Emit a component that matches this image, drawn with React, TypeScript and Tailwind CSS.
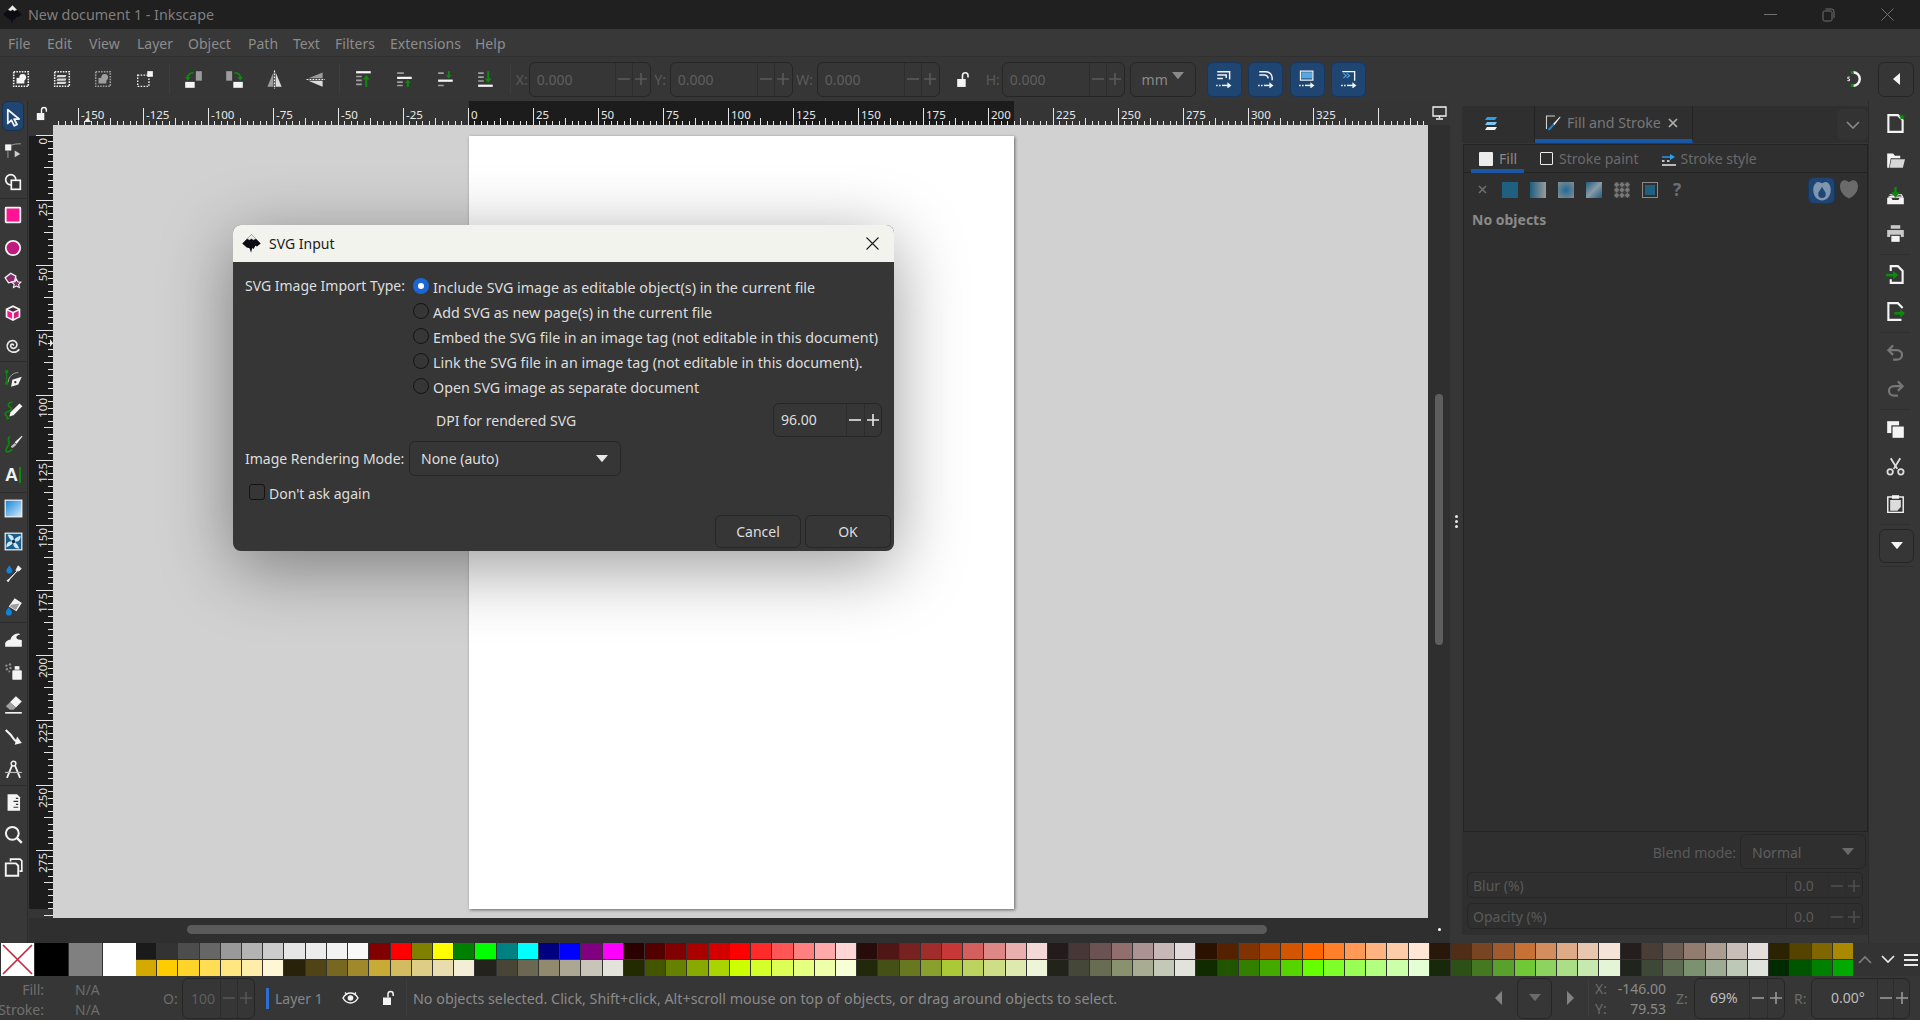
import React from "react";

const W = "#f4f4f4";
const G = "#0b8a0b";

function I({ s = 18, v = "0 0 16 16", o = 1, children }: { s?: number; v?: string; o?: number; children: React.ReactNode }) {
  return (
    <svg width={s} height={s} viewBox={v} opacity={o} className="block shrink-0">
      {children}
    </svg>
  );
}

const Logo = ({ s = 17 }: { s?: number }) => (
  <I s={s}>
    <path d="M8 .3 L15.8 8 L12.6 10.6 L11.2 9.8 L9.8 12.6 L8.6 11.8 L7.6 15.8 L6.4 12 L4 11.4 L.2 8 Z" fill="#0c0c12" />
    <path d="M8 .3 L11.8 4.1 L9.6 5 L8 4 L6.4 5 L4.2 4.1 Z" fill="#ededed" stroke="#777" strokeWidth="0.3" />
  </I>
);

const Dots = ({ o = 1 }: { o?: number }) => <rect x="1.5" y="1.5" width="13" height="13" fill="none" stroke="#f2f2f2" strokeWidth="1.4" strokeDasharray="1.4 1" opacity={o} />;

const Lock = ({ s = 16 }: { s?: number }) => (
  <I s={s}>
    <path d="M3 7.5h8v7.5H3z" fill={W} />
    <path d="M8 7.5V4.2a2.6 2.6 0 0 1 5.2 0V6" fill="none" stroke={W} strokeWidth="1.5" />
  </I>
);

const cmdIcons1 = [
  <I key="a"><Dots /><rect x="4" y="7" width="7" height="5" fill={W} /><circle cx="9.5" cy="6.5" r="3" fill={W} /></I>,
  <I key="b"><Dots /><path d="M4 4.5h8l-1 2H3zM4 7.5h8l-1 2H3zM4 10.5h8l-1 2H3z" fill="#d8d8d8" /></I>,
  <I key="c" o={0.55}><Dots /><rect x="4" y="7" width="7" height="5" fill={W} /><circle cx="9.5" cy="6.5" r="3" fill={W} /></I>,
  <I key="d"><rect x="1.5" y="4.5" width="10" height="10" fill="none" stroke={W} strokeWidth="1.2" strokeDasharray="1.4 1.2" /><rect x="10" y="1" width="5" height="5" fill={W} /></I>,
];

const cmdIcons2 = [
  <I key="a" s={19}><rect x="10" y="1" width="5" height="8" fill="#9c9c9c" /><rect x="1" y="10" width="8" height="5" fill={W} /><path d="M8 2.5A4 4 0 0 0 3.2 7" fill="none" stroke={G} strokeWidth="1.6" /><path d="M0.8 5.8h4.8L3.2 9z" fill={G} /></I>,
  <I key="b" s={19}><rect x="1" y="1" width="5" height="8" fill="#9c9c9c" /><rect x="7" y="10" width="8" height="5" fill={W} /><path d="M8 2.5A4 4 0 0 1 12.8 7" fill="none" stroke={G} strokeWidth="1.6" /><path d="M15.2 5.8h-4.8L12.8 9z" fill={G} /></I>,
  <I key="c" s={19}><path d="M7 2L2 14h5z" fill="#9c9c9c" /><path d="M9 2l5 12H9z" fill="#dcdcdc" /><path d="M8 0.5V16" stroke={W} strokeWidth="1" strokeDasharray="1.5 1" /></I>,
  <I key="d" s={19}><path d="M2 7L14 2v5z" fill="#9c9c9c" /><path d="M2 9l12 5V9z" fill="#dcdcdc" /><path d="M0.5 8H16" stroke={W} strokeWidth="1" strokeDasharray="1.5 1" /></I>,
];

const cmdIcons3 = [
  <I key="a"><rect x="1" y="1" width="13" height="2" fill={W} /><path d="M1 5h5v1.5H1zM1 8.500h5V10H1zM1 12h5v1.5H1z" fill="#a0a0a0" /><path d="M10 15V7" stroke={G} strokeWidth="1.8" /><path d="M7 8.500L10 4.500l3 4z" fill={G} /></I>,
  <I key="b"><path d="M1 2h6v1.5H1z" fill="#a0a0a0" /><rect x="1" y="6" width="13" height="2" fill={W} /><path d="M1 10h5v1.5H1zM1 13h5v1.5H1z" fill="#a0a0a0" /><path d="M10.500 15V11" stroke={G} strokeWidth="1.8" /><path d="M8 11.500L10.500 8.500l2.500 3z" fill={G} /></I>,
  <I key="c"><path d="M1 2h5v1.5H1zM1 13h5v1.5H1z" fill="#a0a0a0" /><rect x="1" y="8.500" width="13" height="2" fill={W} /><path d="M10.500 1V5" stroke={G} strokeWidth="1.8" /><path d="M8 4.500L10.500 7.500l2.500-3z" fill={G} /></I>,
  <I key="d"><path d="M1 2h5v1.5H1zM1 5.500h5V7H1zM1 9h5v1.5H1z" fill="#a0a0a0" /><rect x="1" y="13" width="13" height="2" fill={W} /><path d="M10 1V9" stroke={G} strokeWidth="1.8" /><path d="M7 7.500L10 11.500l3-4z" fill={G} /></I>,
];

const Arr = () => (
  <>
    <path d="M1 13h1.4v1.4H1zM3.6 13H5v1.4H3.6z" fill={W} />
    <path d="M6.2 13.700H12" stroke={W} strokeWidth="1.3" />
    <path d="M11 10.800l3.600 2.900L11 16.500z" fill={W} />
  </>
);
const blueIcons = [
  <I key="a"><path d="M2 1.500h11v7M2 4.500h8v2.500M2 7.500h5" fill="none" stroke={W} strokeWidth="1.3" /><Arr /></I>,
  <I key="b"><path d="M2 1.500h6a5.500 5.500 0 0 1 5.500 5.500v2M2 4.500h5a3.500 3.500 0 0 1 3 3" fill="none" stroke={W} strokeWidth="1.3" /><Arr /></I>,
  <I key="c"><rect x="2.200" y="1" width="11" height="8" fill="none" stroke={W} strokeWidth="1.100" /><rect x="3" y="2" width="9.500" height="5.500" fill="#5aa7e0" /><Arr /></I>,
  <I key="d"><path d="M2 1.500h11v8" fill="none" stroke={W} strokeWidth="1.200" /><path d="M3 3l2.500 2L3 7M6 3l2.500 2L6 7" fill="none" stroke="#4ea3e6" strokeWidth="1.100" /><Arr /></I>,
];

const tools = {
  select: <I s={19}><path d="M3.200 1.500V13l3-2.800L8.700 15l2.300-1.100-2.500-4.600h4.200z" fill="#1f4573" stroke={W} strokeWidth="1.500" strokeLinejoin="round" /></I>,
  node: <I><rect x="1" y="3" width="5.500" height="5.500" fill={W} /><path d="M6 4c3-1.500 6-1.500 9-1.500" fill="none" stroke="#a8a8a8" strokeWidth="0.8" /><path d="M3.500 9c0 2 0 4 0 6" stroke="#a8a8a8" strokeWidth="0.8" /><path d="M9.500 8.500l5 3-5 3z" fill="#cfcfcf" /></I>,
  shape: <I><circle cx="6" cy="6" r="4.500" fill="none" stroke={W} strokeWidth="1.500" /><rect x="6.500" y="6.500" width="8" height="8" fill="#333" stroke={W} strokeWidth="1.500" /></I>,
  rect: <I><rect x="1.500" y="1.500" width="13" height="13" fill="#ff1493" stroke={W} strokeWidth="1.600" rx="0.5" /></I>,
  circle: <I><circle cx="8" cy="8" r="6.400" fill="#c01a7e" stroke={W} strokeWidth="1.600" /></I>,
  star: <I><path d="M6 2l4.500 2.500-1 4.500L4 10.500 1 6z" fill="#8c2a6e" stroke={W} strokeWidth="1.200" /><path d="M11 7l1.200 2.600 2.800.3-2 2 .6 2.800L11 13.400l-2.600 1.300.6-2.800-2-2 2.800-.3z" fill="#8c2a6e" stroke={W} strokeWidth="1" /></I>,
  cube: <I><path d="M8 1l6.500 3.200v7.600L8 15l-6.500-3.200V4.200z" fill={W} /><path d="M8 2.800l4.400 2L8 6.800l-4.400-2z" fill="#4a2a3a" /><path d="M3 6l4.200 2v5l-4.200-2z" fill="#ff1493" /><path d="M13 6L8.800 8v5l4.200-2z" fill="#d81b7e" /></I>,
  spiral: <I><path d="M8.200 8.500c.6-1.200-1.200-1.700-2-.7-1 1.400.4 3.400 2.500 3.200 2.600-.3 3.600-3.400 2.200-5.300C9.200 3.400 5.400 3.700 3.600 6.200 1.700 9 3.200 13.200 7 14.200c2.600.6 5-.4 6.600-2.500" fill="none" stroke="#e8e8e8" strokeWidth="1.500" /></I>,
  pen: <I s={19}><rect x="1" y="1" width="2.600" height="2.600" fill={G} /><rect x="1" y="10.500" width="2.600" height="2.600" fill={G} /><path d="M2.300 3.600v7" stroke={G} strokeWidth="1" /><path d="M3.500 11C4 6 8 3 12 3" fill="none" stroke="#a8a8a8" strokeWidth="0.8" /><path d="M15 6.500l-3 6.500-6 2 1-6z" fill={W} /><circle cx="9.500" cy="11" r="1" fill="#333" /></I>,
  pencil: <I s={19}><path d="M7 1C3 1 3 4 5 5S7 8 3 9s-1 4 0 4" fill="none" stroke={G} strokeWidth="1.300" /><path d="M13 2l2.500 2.500-7.500 7.500-3.500 1 1-3.500z" fill={W} /><path d="M2 12.500L5 15l-3 .7z" fill={G} /></I>,
  calli: <I s={19}><path d="M15 1.500L9 7l1.500 1.500L15.500 2z" fill={W} /><path d="M9 7.500l1.500 1.500-3 2.500c-1 .6-2-.6-1.400-1.400z" fill="#bdbdbd" /><path d="M5 2C2 4 5 7 4 9S1 12 2 15c2 .5 4-1 5-2" fill="none" stroke={G} strokeWidth="1.400" /></I>,
  grad: <I s={19}><defs><linearGradient id="lg1" x1="0" y1="0" x2="1" y2="1"><stop offset="0" stopColor="#0f83d8" /><stop offset="1" stopColor="#d8ecfa" /></linearGradient></defs><rect x="1" y="1" width="14" height="14" fill="url(#lg1)" stroke={W} strokeWidth="1" /></I>,
  mesh: <I s={19}><rect x="1" y="1" width="14" height="14" fill="#1a5f8c" stroke={W} strokeWidth="1" /><path d="M8 8c-3-1-4-4-5-6 3 0 6 1 5 6zM8 8c3 1 4 4 5 6-3 0-6-1-5-6zM8 8c1-3 4-4 6-5 0 3-1 6-6 5zM8 8c-1 3-4 4-6 5 0-3 1-6 6-5z" fill="#cfe6f5" /><circle cx="8" cy="8" r="1.400" fill="#0d2d45" /></I>,
  dropper: <I s={19}><path d="M4.500 1C3.500 3 2 4 2 5.500a2.500 2.500 0 0 0 5 0C7 4 5.500 3 4.500 1z" fill="#0f83d8" /><path d="M12 1.500l2.500 2.500-2 2-.8-.6L6 11l-2.500 4-1-1 3.800-2.800L10.800 6l-.8-.8z" fill={W} stroke={W} strokeWidth="0.7" /></I>,
  bucket: <I s={19}><path d="M9 1l6 4-4.500 7-6.500-4z" fill={W} /><path d="M6 6.500l7-1-3 5.500-5-3z" fill="#9d9d9d" /><path d="M4 8.500C3 10.500 1.500 11.500 1.500 13a2.600 2.600 0 0 0 5.200 0C6.700 11.500 5 10.500 4 8.500z" fill="#0f83d8" /></I>,
  tweak: <I s={19}><path d="M1 14v-3c1-1.800 3-3 4.600-3 .4-2.400 3-5 6-5 1 0 1.600.5 2 1-2.200 0-3.600 1.400-3 3 .5 1 2.300 1.300 4.400 1.500V14z" fill={W} /></I>,
  spray: <I s={19}><rect x="7" y="7" width="8" height="8" rx="1" fill={W} /><rect x="9" y="3.500" width="4" height="3" fill={W} /><circle cx="2" cy="3" r="1" fill="#8e8e8e" /><circle cx="5" cy="2" r="1" fill="#8e8e8e" /><circle cx="2.500" cy="6" r="1" fill="#8e8e8e" /><circle cx="5.500" cy="5" r="1" fill="#8e8e8e" /><circle cx="4.500" cy="8" r="0.8" fill="#8e8e8e" /></I>,
  eraser: <I s={19}><path d="M10 1l5 4.500-5 5L5 6z" fill={W} /><path d="M5 6l5 4.500-2 2H5L1.500 9.500z" fill="#a0a0a0" /><path d="M1 15h14" stroke={W} strokeWidth="1.400" /></I>,
  conn: <I s={19}><path d="M1.500 2.500L6 7c1.500 2 2.500 4.500 4.500 5L12 12" fill="none" stroke={W} strokeWidth="1.800" /><path d="M11 8l4 5.500-6 1.500z" fill={W} /></I>,
  lpe: <I s={19}><circle cx="8" cy="3" r="2" fill="none" stroke={W} strokeWidth="1.200" /><path d="M6.800 4.500L2.500 15M9.200 4.500L13.500 15" stroke={W} strokeWidth="1.500" /><path d="M1 10.500h14" stroke="#bdbdbd" strokeWidth="1" /></I>,
  doc: <I s={19}><path d="M3 1h8l2.500 2.500V15H3z" fill={W} /><path d="M10 4.500h2M8 7h4M10 9.500h2M8 12h4" stroke="#333" strokeWidth="1" /></I>,
  zoom: <I s={19}><circle cx="7" cy="7" r="5.400" fill="none" stroke={W} strokeWidth="1.700" /><path d="M11 11l4 4" stroke={W} strokeWidth="2" /></I>,
  pages: <I s={19}><path d="M5.500 3V1h8l1.500 1.500V11h-2" fill="none" stroke={W} strokeWidth="1.400" /><path d="M1.500 4.500h8.500l2 2v8.500H1.500z" fill="none" stroke={W} strokeWidth="1.600" /></I>,
};

const Sep = () => <div className="h-px w-full bg-[#2b2b2b] shrink-0" />;

function ToolItem({ children, active }: { children: React.ReactNode; active?: boolean }) {
  return (
    <div className="h-[32.4px] w-full flex items-center justify-center relative shrink-0">
      {active && <div className="absolute left-[2px] top-0 w-[22px] h-[30px] rounded-md bg-[#1f4573] border border-[#17314f]" />}
      <div className="relative">{children}</div>
    </div>
  );
}

function LeftBar() {
  const g = [
    [tools.select, tools.node, tools.shape],
    [tools.rect, tools.circle, tools.star, tools.cube, tools.spiral],
    [tools.pen, tools.pencil, tools.calli, <div key="t" className="flex items-center"><span className="text-[18px] font-bold leading-none text-[#f2f2f2] font-['Liberation_Sans',sans-serif]">A</span><span className="w-[2px] h-[16px] bg-[#0b8a0b] ml-[1px]" /></div>],
    [tools.grad, tools.mesh, tools.dropper, tools.bucket],
    [tools.tweak, tools.spray, tools.eraser, tools.conn, tools.lpe],
    [tools.doc, tools.zoom, tools.pages],
  ];
  return (
    <div className="w-[26px] pr-px shrink-0 bg-[#383838] border-r border-[#2b2b2b] box-content">
      {g.map((items, i) => (
        <React.Fragment key={i}>
          {i > 0 && <Sep />}
          {items.map((it, j) => (
            <ToolItem key={j} active={i === 0 && j === 0}>{it}</ToolItem>
          ))}
        </React.Fragment>
      ))}
    </div>
  );
}

function HRuler() {
  const items: React.ReactNode[] = [];
  for (let i = -64; i <= 148; i++) {
    const x = 415 + i * 6.5;
    const maj = i % 10 === 0;
    const mid = i % 5 === 0;
    const top = maj ? 7 : mid ? 17 : 19.5;
    items.push(<line key={i} x1={x} x2={x} y1={top} y2={24} stroke="#e6e6e6" strokeWidth="1" shapeRendering="crispEdges" />);
    if (maj && i < 140) {
      items.push(
        <text key={"t" + i} x={x + 3} y={17.5} fontSize="11.5" fill="#e8e8e8" fontFamily="Noto Sans, sans-serif">
          {i * 2.5}
        </text>
      );
    }
  }
  return (
    <svg width="1375" height="24" className="block shrink-0 bg-[#353535]">
      <rect x="416" y="0" width="545" height="24" fill="#1c1c1c" />
      {items}
      <path d="M31 24l3-4h1l3 4z" fill="#e8e8e8" transform="translate(0,-3)" />
    </svg>
  );
}

function VRuler() {
  const items: React.ReactNode[] = [];
  for (let i = 0; i <= 120; i++) {
    const y = 10 + i * 6.5;
    const maj = i % 10 === 0;
    const mid = i % 5 === 0;
    const left = maj && i < 120 ? 7 : mid ? 15 : 19;
    items.push(<line key={i} x1={left} x2={24} y1={y} y2={y} stroke="#e6e6e6" strokeWidth="1" shapeRendering="crispEdges" />);
    if (maj && i < 120) {
      items.push(
        <text key={"t" + i} transform={`translate(17.5 ${y + 3}) rotate(-90)`} textAnchor="end" fontSize="11.5" fill="#e8e8e8" fontFamily="Noto Sans, sans-serif">
          {i * 2.5}
        </text>
      );
    }
  }
  return (
    <svg width="24" height="793" className="block shrink-0 bg-[#353535]">
      <rect x="0" y="11" width="24" height="773" fill="#1c1c1c" />
      {items}
      <path d="M21 214l3 4-3 4z" fill="#e8e8e8" />
    </svg>
  );
}

function PM({ c = "#5a5a5a", w = 17.5 }: { c?: string; w?: number }) {
  return (
    <>
      <div className="h-full border-l border-[#2c2c2c] flex items-center justify-center shrink-0" style={{ width: w }}>
        <svg width="12" height="12" viewBox="0 0 12 12"><path d="M0 6h12" stroke={c} strokeWidth="1.6" /></svg>
      </div>
      <div className="h-full border-l border-[#2c2c2c] flex items-center justify-center shrink-0" style={{ width: w }}>
        <svg width="12" height="12" viewBox="0 0 12 12"><path d="M0 6h12M6 0v12" stroke={c} strokeWidth="1.6" /></svg>
      </div>
    </>
  );
}

function CmdField({ label, lw, value, w }: { label: string; lw: number; value: string; w: number }) {
  return (
    <>
      <div className="text-[14px] text-[#5a5a5a] text-center shrink-0" style={{ width: lw }}>{label}</div>
      <div className="h-[35px] flex items-center border border-[#262626] rounded-md shrink-0" style={{ width: w }}>
        <div className="flex-1 pl-[7px] text-[14px] text-[#5f5f5f]">{value}</div>
        <PM />
      </div>
    </>
  );
}

const Caret = ({ c = "#dcdcdc", w = 12 }: { c?: string; w?: number }) => (
  <svg width={w} height={w * 0.6} viewBox="0 0 10 6" className="block shrink-0"><path d="M0 0h10L5 6z" fill={c} /></svg>
);

function CmdBar() {
  const Btn = ({ c, w }: { c: React.ReactNode; w: string }) => <div className={`${w} h-full flex items-center justify-center shrink-0`}>{c}</div>;
  const V = () => <div className="w-px h-[30px] bg-[#3e3e3e] mx-[3.5px] shrink-0" />;
  return (
    <div className="h-[44px] shrink-0 bg-[#363636] flex items-center">
      {cmdIcons1.map((c, i) => <Btn key={i} c={c} w="w-[41.3px]" />)}
      <V />
      {cmdIcons2.map((c, i) => <Btn key={i} c={c} w="w-[40.7px]" />)}
      <V />
      {cmdIcons3.map((c, i) => <Btn key={i} c={c} w="w-[40.7px]" />)}
      <V />
      <CmdField label="X:" lw={14} value="0.000" w={122} />
      <CmdField label="Y:" lw={19} value="0.000" w={123} />
      <CmdField label="W:" lw={24} value="0.000" w={123} />
      <div className="w-[46px] flex justify-center shrink-0"><Lock s={17} /></div>
      <div className="w-[16px] text-[14px] text-[#5a5a5a] shrink-0">H:</div>
      <div className="h-[35px] w-[123px] flex items-center border border-[#262626] rounded-md shrink-0">
        <div className="flex-1 pl-[7px] text-[14px] text-[#5f5f5f]">0.000</div>
        <PM />
      </div>
      <div className="ml-[5px] w-[66px] h-[35px] border border-[#262626] rounded-md flex items-center justify-center gap-[4px] text-[14px] text-[#8a8a8a] shrink-0">
        mm<div className="mb-[6px]"><Caret c="#8a8a8a" /></div>
      </div>
      <div className="w-[11px] shrink-0" />
      <div className="flex gap-[6.5px] shrink-0">
        {blueIcons.map((c, i) => (
          <div key={i} className="w-[35px] h-[35px] rounded-md bg-[#1f4573] border border-[#19375c] flex items-center justify-center">{c}</div>
        ))}
      </div>
      <div className="flex-1" />
      <div className="mr-[16px]">
        <svg width="18" height="18" viewBox="0 0 16 16" className="block">
          <path d="M8 2a6 6 0 0 1 0 12" fill="none" stroke="#f2f2f2" strokeWidth="2.200" />
          <rect x="6" y="1" width="2.600" height="2.600" fill={G} />
          <rect x="6" y="12.400" width="2.600" height="2.600" fill={G} />
          <path d="M5 6.400c-1-.5-2 0-1.600.9.4.7 1.600.6 1.600 1.400 0 .9-1.200 1-2 .5" fill="none" stroke="#f2f2f2" strokeWidth="0.9" />
        </svg>
      </div>
      <div className="w-[36px] h-[35px] border border-[#262626] rounded-md flex items-center justify-center mr-[6px] shrink-0">
        <svg width="7" height="12" viewBox="0 0 7 12"><path d="M7 0v12L0 6z" fill={W} /></svg>
      </div>
    </div>
  );
}

function Canvas() {
  return (
    <div className="w-[1375px] h-[793px] bg-[#d1d1d1] overflow-hidden pl-[416px] pt-[11px] shrink-0">
      <div className="w-[545px] h-[773px] bg-white shadow-[1px_1px_3px_rgba(0,0,0,0.5)]" />
    </div>
  );
}

function CenterArea() {
  return (
    <div className="w-[1421px] h-full flex flex-col shrink-0 bg-[#2f2f2f]">
      <div className="h-[24px] flex shrink-0 bg-[#353535]">
        <div className="w-[24px] flex items-center justify-center shrink-0"><Lock s={15} /></div>
        <HRuler />
        <div className="flex-1 flex items-center justify-center">
          <svg width="15" height="14" viewBox="0 0 15 14"><path d="M1 1h13v9H1z" fill="none" stroke={W} strokeWidth="1.300" /><path d="M7.500 10v2M4 13h7" stroke={W} strokeWidth="1.300" /></svg>
        </div>
      </div>
      <div className="flex h-[793px] shrink-0">
        <VRuler />
        <Canvas />
        <div className="flex-1 flex justify-center pt-[269px]">
          <div className="w-[8px] h-[251px] rounded-full bg-[#5e5e5e]" />
        </div>
      </div>
      <div className="flex-1 relative pt-[7px] pl-[158px]">
        <div className="w-[1080px] h-[9px] rounded-full bg-[#5a5a5a]" />
        <div className="absolute right-[9px] top-[10px] w-[3px] h-[3px] rounded-full bg-white" />
      </div>
    </div>
  );
}

const Swatch = ({ className }: { className: string }) => <div className={`w-[16px] h-[16px] ${className}`} />;

function Dock() {
  return (
    <div className="w-[406px] h-full flex flex-col shrink-0 pt-[5px] bg-[#363636]">
      <div className="h-[37px] bg-[#2f2f2f] flex shrink-0 relative">
        <div className="w-[73px] border-r border-[#232323] flex items-center justify-center pb-[2px] pr-[14px]">
          <svg width="17" height="15" viewBox="0 0 17 15"><path d="M4 1h10l-2 3H2z" fill="#28a0f0" /><path d="M4 6h10l-2 3H2z" fill="#7cc6f7" /><path d="M4 11h10l-2 3H2z" fill="#f2f2f2" /></svg>
        </div>
        <div className="w-[158px] border-r border-[#232323] border-b-[4px] border-b-[#1a56a6] flex items-center pl-[10px] gap-[6px] pt-[1px] text-[14.2px] text-[#787878]">
          <svg width="16" height="16" viewBox="0 0 16 16" className="shrink-0"><path d="M10 1H1.500v13" fill="none" stroke="#cfcfcf" strokeWidth="1.100" /><path d="M15 1.500L8 9l1.300 1.300 6.200-8z" fill={W} /><path d="M8 9l1.300 1.300L5 15l-2 .5.5-2z" fill="#1d8ad8" /></svg>
          <span>Fill and Stroke</span>
          <svg width="10" height="10" viewBox="0 0 10 10" className="ml-[1px]"><path d="M1 1l8 8M9 1L1 9" stroke="#b0b0b0" strokeWidth="1.700" /></svg>
        </div>
        <div className="flex-1" />
        <div className="w-[31px] h-[31px] mt-[3px] rounded-md bg-[#333333] flex items-center justify-center">
          <svg width="14" height="8" viewBox="0 0 14 8"><path d="M1 1l6 6 6-6" fill="none" stroke="#8a8a8a" strokeWidth="1.600" /></svg>
        </div>
      </div>
      <div className="h-[688px] mt-[1px] ml-[1px] border border-[#232323] bg-[#2f2f2f] shrink-0">
        <div className="h-[28px] border-b border-[#232323] flex items-start pl-[7px] text-[14px] text-[#6a6a6a]">
          <div className="w-[53px] h-[28px] border-b-[4px] border-[#1a56a6] flex items-start pl-[8px] gap-[6px] pt-[2px] shrink-0 box-border">
            <div className="w-[14px] h-[14px] mt-[5px] bg-[#ececec] rounded-[1px] shrink-0" />
            <span className="text-[#8a8a8a] leading-[24px]">Fill</span>
          </div>
          <div className="ml-[16px] flex gap-[6px] pt-[2px] shrink-0">
            <div className="w-[13px] h-[13px] mt-[5px] border-[1.5px] border-[#ececec] rounded-[1px] shrink-0" />
            <span className="leading-[24px]">Stroke paint</span>
          </div>
          <div className="ml-[23px] flex gap-[5px] pt-[2px] shrink-0">
            <svg width="14" height="14" viewBox="0 0 14 14" className="mt-[5px] shrink-0"><path d="M0 5h9" stroke="#2aa0ef" strokeWidth="1.400" /><path d="M8 2l5 3-5 3z" fill="#2aa0ef" /><path d="M0 9h2.500M5 9h2.500" stroke={W} strokeWidth="1.400" /><path d="M0 13h14" stroke={W} strokeWidth="1.400" /></svg>
            <span className="leading-[24px]">Stroke style</span>
          </div>
        </div>
        <div className="h-[33px] mb-[4px] flex items-center relative">
          <svg width="9" height="9" viewBox="0 0 9 9" className="ml-[14px] shrink-0"><path d="M1 1l7 7M8 1L1 8" stroke="#6e6e6e" strokeWidth="1.600" /></svg>
          <div className="ml-[15px] flex gap-[12px] items-center">
            <Swatch className="bg-[#1f5f80]" />
            <Swatch className="bg-[linear-gradient(90deg,#1f5f80,#9a9a9a)]" />
            <Swatch className="bg-[radial-gradient(circle,#1a6c9c,#8c8c8c)]" />
            <Swatch className="bg-[linear-gradient(135deg,#1f5f80_0%,#8a9aa6_50%,#1f5f80_100%)]" />
            <svg width="16" height="16" viewBox="0 0 16 16" className="shrink-0"><rect width="16" height="16" fill="#3c3c3c" /><path d="M2.700 0L5.300 2.700 2.700 5.300 0 2.700zM8 0l2.700 2.700L8 5.300 5.300 2.700zM13.300 0L16 2.700l-2.700 2.600-2.600-2.600zM2.700 5.300L5.300 8 2.700 10.700 0 8zM8 5.300L10.700 8 8 10.700 5.300 8zM13.300 5.300L16 8l-2.700 2.700L10.700 8zM2.700 10.700l2.600 2.600L2.700 16 0 13.300zM8 10.700l2.700 2.600L8 16l-2.700-2.700zM13.300 10.700l2.700 2.600-2.700 2.700-2.600-2.700z" fill="#787878" /></svg>
            <div className="w-[16px] h-[16px] border border-[#8a8a8a] flex items-center justify-center"><div className="w-[10px] h-[10px] bg-[#1f5f80]" /></div>
          </div>
          <span className="ml-[15px] text-[17px] font-bold text-[#6e6e6e]">?</span>
          <div className="absolute left-[344px] top-[4px] w-[27px] h-[27px] rounded-md bg-[#1f4573] border border-[#19375c] flex items-center justify-center">
            <svg width="20" height="20" viewBox="0 0 16 16"><path d="M8 15.500c-4 0-7-3.500-7-8.500 0-3 1.500-5.500 3.200-6C6 .5 7 1.800 8 1.800S10 .5 11.800 1C13.500 1.500 15 4 15 7c0 5-3 8.500-7 8.500z" fill="#7f96b0" /><path d="M8 4.500C6.500 7.500 5 8.500 5 10.500a3 3 0 0 0 6 0C11 8.500 9.500 7.500 8 4.500z" fill="#1f4573" /></svg>
          </div>
          <div className="absolute left-[375px] top-[5px]">
            <svg width="20" height="22" viewBox="0 0 16 16"><path d="M8 15.500C4 14 .8 10 .8 6 .8 3 2.500 1 4.500 1 6 1 7 2 8 2.500 9 2 10 1 11.500 1c2 0 3.700 2 3.700 5 0 4-3.200 8-7.200 9.500z" fill="#6b6b6b" /></svg>
          </div>
        </div>
        <div className="pl-[8px] text-[14px] font-bold text-[#8a8a8a] leading-[20px]">No objects</div>
      </div>
      <div className="flex-1 bg-[#2f2f2f] mb-[8px] text-[14px] text-[#5a5a5a]">
        <div className="h-[38px] pt-[1px] flex items-center justify-end pr-[2px]">
          <span className="mr-[4px] mt-[2px]">Blend mode:</span>
          <div className="w-[126px] h-[35px] border border-[#262626] rounded-md flex items-center justify-between px-[11px] text-[#5f5f5f]">
            <span className="mt-[2px]">Normal</span><Caret c="#6a6a6a" />
          </div>
        </div>
        {["Blur (%)", "Opacity (%)"].map((t, i) => (
          <div key={t} className={`h-[26px] ml-[5px] mr-[5px] border border-[#262626] rounded-[5px] flex items-center pt-[1px] ${i ? "mt-[5px]" : "mt-[2px]"}`}>
            <div className="w-[319px] pl-[5px] border-r border-[#262626] h-full flex items-center shrink-0">{t}</div>
            <div className="flex-1 pl-[7px]">0.0</div>
            <PM c="#4e4e4e" w={17} />
          </div>
        ))}
      </div>
    </div>
  );
}

function RightBar() {
  const Item = ({ c }: { c: React.ReactNode }) => <div className="h-[36.8px] pl-[2px] flex items-center justify-center shrink-0">{c}</div>;
  const S = () => <div className="mt-[2px] mb-[1px] mx-[10px] h-px bg-[#2f2f2f] shrink-0" />;
  const doc = "M2 1h8l4 4v10H2z";
  return (
    <div className="flex-1 h-full pt-[4px] bg-[#363636] border-l border-[#2b2b2b] flex flex-col">
      <Item c={<I s={19}><path d={doc} fill="none" stroke={W} strokeWidth="1.800" /><path d="M13.500 0l.8 1.700 1.700.2-1.200 1.300.3 1.800-1.600-.9-1.600.9.300-1.800L11 1.900l1.700-.2z" fill={G} /></I>} />
      <Item c={<I s={19}><path d="M1 2h5l1.500 2H12v2H4L2.500 14H1z" fill={W} /><path d="M4.500 7H16l-1.800 7H3z" fill="#d8d8d8" /></I>} />
      <Item c={<I s={19}><path d="M1 9h3.500l1 2h5l1-2H15v5.500H1z" fill={W} /><path d="M3 6.500h2.500M10.500 6.500H13l1 2H2z" fill="none" stroke={W} strokeWidth="1" /><path d="M8 0v6" stroke={G} strokeWidth="2" /><path d="M4.500 4.500L8 9l3.500-4.500z" fill={G} /></I>} />
      <Item c={<I s={19}><rect x="4" y="1" width="8" height="3" fill="#c8c8c8" /><path d="M1 5h14v6h-2.500V9h-9v2H1z" fill="#c8c8c8" /><rect x="4.500" y="10" width="7" height="5" fill={W} /></I>} />
      <S />
      <Item c={<I s={19}><path d="M4 5V1h6l4 4v10H4v-3" fill="none" stroke={W} strokeWidth="1.800" /><path d="M0 8.500h7" stroke={G} strokeWidth="2.200" /><path d="M6 5l4.500 3.500L6 12z" fill={G} /></I>} />
      <Item c={<I s={19}><path d="M14 5V5l-4-4H2v14h11" fill="none" stroke={W} strokeWidth="1.800" /><path d="M7 9.500h6" stroke={G} strokeWidth="2.200" /><path d="M12 6l4 3.500L12 13z" fill={G} /></I>} />
      <S />
      <Item c={<I s={19}><path d="M6 2L2 6l4 4" fill="none" stroke="#777" strokeWidth="1.800" /><path d="M2 6h7c3 0 4.500 2 4.500 4s-1.500 4-4.500 4H6" fill="none" stroke="#777" strokeWidth="1.800" /></I>} />
      <Item c={<I s={19}><path d="M10 2l4 4-4 4" fill="none" stroke="#777" strokeWidth="1.800" /><path d="M14 6H7C4 6 2.500 8 2.500 10s1.500 4 4.500 4h3" fill="none" stroke="#777" strokeWidth="1.800" /></I>} />
      <S />
      <Item c={<I s={19}><rect x="1" y="1" width="10" height="10" fill={W} /><rect x="5" y="5" width="10.500" height="10.500" fill={W} stroke="#363636" strokeWidth="1" /></I>} />
      <Item c={<I s={19}><path d="M4 1l5.500 9M12 1L6.500 10" stroke="#ddd" strokeWidth="1.600" /><circle cx="3.500" cy="12.500" r="2.300" fill="none" stroke="#ddd" strokeWidth="1.500" /><circle cx="12.500" cy="12.500" r="2.300" fill="none" stroke="#ddd" strokeWidth="1.500" /></I>} />
      <Item c={<I s={19}><rect x="1.500" y="2.500" width="13" height="13" fill="none" stroke={W} strokeWidth="1.200" /><rect x="5" y="1" width="6" height="3" fill={W} /><path d="M3.500 5h9v6l-3 3h-6z" fill="#dcdcdc" /></I>} />
      <S />
      <div className="mt-[3px] ml-[10px] mr-[6px] h-[34px] rounded-md border border-[#262626] flex items-center justify-center shrink-0"><Caret c={W} /></div>
      <div className="mt-[3px] ml-[10px] mr-[6px] h-px bg-[#2f2f2f] shrink-0" />
    </div>
  );
}

const row1 = ["1a1a1a","333333","4d4d4d","666666","999999","b3b3b3","cccccc","e6e6e6","ececec","f2f2f2","f9f9f9","800000","ff0000","808000","ffff00","008000","00ff00","008080","00ffff","000080","0000ff","800080","ff00ff","2b0000","550000","800000","aa0000","d40000","ff0000","ff2a2a","ff5555","ff8080","ffaaaa","ffd5d5","280b0b","501616","782121","a02c2c","c83737","d35f5f","de8787","e9afaf","f4d7d7","241c1c","483737","6c5353","916f6f","ac9393","c8b7b7","e3dbdb","2b1100","552200","803300","aa4400","d45500","ff6600","ff7f2a","ff9955","ffb380","ffccaa","ffe6d5","28170b","502d16","784421","a05a2c","c87137","d38d5f","deaa87","e9c6af","f4e3d7","241f1c","483e37","6c5d53","917c6f","ac9d93","c8beb7","e3dedb","2b2200","554400","806600","aa8800"];
const row2 = ["d4aa00","ffcc00","ffd42a","ffdd55","ffe680","ffeeaa","fff6d5","28220b","504416","786721","a0892c","c8ab37","d3bc5f","decd87","e9ddaf","f4eed7","24221c","484537","6c6753","918a6f","aca793","c8c4b7","e3e2db","222b00","445500","668000","88aa00","aad400","ccff00","d4ff2a","ddff55","e5ff80","eeffaa","f6ffd5","22280b","445016","677821","89a02c","abc837","bcd35f","cdde87","dde9af","eef4d7","22241c","454837","676c53","8a916f","a7ac93","c4c8b7","e2e3db","112b00","225500","338000","44aa00","55d400","66ff00","7fff2a","99ff55","b3ff80","ccffaa","e5ffd5","17280b","2d5016","447821","5aa02c","71c837","8dd35f","aade87","c6e9af","e3f4d7","1f241c","3e4837","5d6c53","7c916f","9dac93","bec8b7","dee3db","002b00","005500","008000","00aa00"];

function Palette() {
  return (
    <div className="h-[33px] shrink-0 bg-[#333333] flex">
      <div className="w-[33px] ml-px bg-white shrink-0">
        <svg width="33" height="33" viewBox="0 0 33 33" className="block"><path d="M2 2l29 29M31 2L2 31" stroke="#c8283c" strokeWidth="1.700" /></svg>
      </div>
      <div className="w-[33px] ml-px bg-black shrink-0" />
      <div className="w-[33px] ml-px bg-[#808080] shrink-0" />
      <div className="w-[33px] ml-px bg-white shrink-0" />
      <div className="w-[1717px] grid grid-rows-2 gap-y-px gap-x-px grid-cols-[repeat(81,minmax(0,1fr))] shrink-0">
        {row1.map((c, i) => <div key={"a" + i} style={{ background: "#" + c }} />)}
        {row2.map((c, i) => <div key={"b" + i} style={{ background: "#" + c }} />)}
      </div>
      <div className="flex-1 flex items-center pl-[5px] gap-[9px]">
        <svg width="14" height="9" viewBox="0 0 14 9"><path d="M1 8l6-6 6 6" fill="none" stroke="#7d7d7d" strokeWidth="1.700" /></svg>
        <svg width="14" height="9" viewBox="0 0 14 9"><path d="M1 1l6 6 6-6" fill="none" stroke="#e8e8e8" strokeWidth="1.700" /></svg>
        <svg width="14" height="14" viewBox="0 0 14 14"><path d="M0 2h14M0 7h14M0 12h14" stroke="#e8e8e8" strokeWidth="2" /></svg>
      </div>
    </div>
  );
}

function Status() {
  const T = ({ children, cls = "" }: { children: React.ReactNode; cls?: string }) => <div className={`shrink-0 ${cls}`}>{children}</div>;
  return (
    <div className="flex-1 bg-[#363636] flex items-center text-[#7e7e7e] text-[14px] leading-[20px]">
      <div className="w-[44px] pt-[3px] flex flex-col items-end text-[#707070] shrink-0">
        <span>Fill:</span>
        <span>Stroke:</span>
      </div>
      <div className="w-[119px] pt-[3px] pl-[31px] flex flex-col shrink-0 text-[#6c6c6c]">
        <span>N/A</span>
        <span>N/A</span>
      </div>
      <T cls="w-[19px] pt-[2px] text-[#6c6c6c]">O:</T>
      <div className="w-[73px] h-[41px] border border-[#262626] rounded-md flex items-center shrink-0">
        <div className="flex-1 pl-[8px] pt-[1px] text-[#5f5f5f]">100</div>
        <PM c="#555555" w={17} />
      </div>
      <div className="ml-[11px] w-[3px] h-[21px] bg-[#2d6fd0] shrink-0" />
      <T cls="ml-[6px] w-[67px] pt-[2px] text-[#868686]">Layer 1</T>
      <div className="w-[16px] shrink-0">
        <svg width="17" height="15" viewBox="0 0 17 15" className="block"><path d="M1 7c2-3.500 4.500-5 7.500-5S14 3.500 16 7c-2 3.500-4.500 5-7.500 5S3 10.500 1 7z" fill="none" stroke={W} strokeWidth="1.500" /><circle cx="8.500" cy="7" r="2.800" fill={W} /><path d="M3 1.500l2 2M14 1.500l-2 2" stroke={W} strokeWidth="1.200" /></svg>
      </div>
      <div className="w-[22px] shrink-0" />
      <Lock s={16} />
      <div className="ml-[10px] w-px h-[38px] bg-[#3e3e3e] shrink-0" />
      <T cls="ml-[6px] pt-[2px] text-[14.3px] text-[#8a8a8a]">No objects selected. Click, Shift+click, Alt+scroll mouse on top of objects, or drag around objects to select.</T>
      <div className="flex-1" />
      <svg width="7" height="14" viewBox="0 0 7 14" className="shrink-0"><path d="M7 0v14L0 7z" fill="#828282" /></svg>
      <div className="ml-[15px] w-[35px] h-[41px] border border-[#262626] rounded-md flex items-center justify-center shrink-0"><Caret c="#6a6a6a" /></div>
      <svg width="7" height="14" viewBox="0 0 7 14" className="ml-[15px] shrink-0"><path d="M0 0v14l7-7z" fill="#828282" /></svg>
      <div className="ml-[14px] w-px h-[38px] bg-[#3e3e3e] shrink-0" />
      <div className="ml-[6px] pt-[2px] w-[13px] flex flex-col text-[#6c6c6c] shrink-0"><span>X:</span><span>Y:</span></div>
      <div className="w-[58px] pt-[2px] flex flex-col items-end text-[#8a8a8a] shrink-0"><span>-146.00</span><span>79.53</span></div>
      <T cls="ml-[10px] w-[18px] pt-[1px] text-[#6c6c6c]">Z:</T>
      <div className="w-[91px] h-[41px] border border-[#262626] rounded-md flex items-center shrink-0">
        <div className="flex-1 pl-[15px] text-[#bdbdbd]">69%</div>
        <PM c="#9a9a9a" />
      </div>
      <T cls="ml-[9px] w-[17px] pt-[1px] text-[#6c6c6c]">R:</T>
      <div className="w-[99px] h-[41px] border border-[#262626] rounded-md flex items-center shrink-0">
        <div className="flex-1 pl-[19px] text-[#bdbdbd]">0.00°</div>
        <PM c="#9a9a9a" w={16} />
      </div>
      <div className="w-[10px] shrink-0" />
    </div>
  );
}

function Radio({ on, label }: { on?: boolean; label: string }) {
  return (
    <div className="h-[25px] flex items-start shrink-0">
      {on ? (
        <div className="w-[16px] h-[16px] rounded-full bg-[#1a66d6] flex items-center justify-center mt-[3px] shrink-0"><div className="w-[6px] h-[6px] rounded-full bg-white" /></div>
      ) : (
        <div className="w-[16px] h-[16px] rounded-full border border-[#141414] bg-[#363636] mt-[3px] shrink-0" />
      )}
      <span className="ml-[4px] mt-[3px] whitespace-nowrap text-[14.3px]">{label}</span>
    </div>
  );
}

function Dialog() {
  return (
    <div className="absolute left-[233px] top-[225px] w-[661px] h-[326px] rounded-lg overflow-hidden bg-[#363636] shadow-[0_16px_70px_rgba(0,0,0,0.4)] text-[14px] leading-[20px] text-[#dedede]">
      <div className="h-[37px] bg-[#f3f3ee] flex items-center pl-[9px] text-[#1b1b1b]">
        <Logo s={19} />
        <span className="ml-[8px]">SVG Input</span>
        <div className="flex-1" />
        <svg width="13" height="13" viewBox="0 0 13 13" className="mr-[15px]"><path d="M.5.5l12 12M12.500.5l-12 12" stroke="#1b1b1b" strokeWidth="1.100" /></svg>
      </div>
      <div className="flex flex-col pl-[12px] pt-[13px]">
        <div className="flex items-start">
          <div className="w-[168px] pt-[1px] shrink-0">SVG Image Import Type:</div>
          <div className="flex flex-col">
            <Radio on label="Include SVG image as editable object(s) in the current file" />
            <Radio label="Add SVG as new page(s) in the current file" />
            <Radio label="Embed the SVG file in an image tag (not editable in this document)" />
            <Radio label="Link the SVG file in an image tag (not editable in this document)." />
            <Radio label="Open SVG image as separate document" />
          </div>
        </div>
        <div className="mt-[3px] h-[34px] flex items-center pl-[191px]">
          <span className="flex-1 pt-[1px]">DPI for rendered SVG</span>
          <div className="mr-[12px] w-[109px] h-[34px] border border-[#262626] rounded-md flex items-center">
            <div className="flex-1 pl-[7px]">96.00</div>
            <PM c="#e8e8e8" />
          </div>
        </div>
        <div className="mt-[4px] h-[35px] flex items-center">
          <span className="w-[164px] pt-[1px] shrink-0">Image Rendering Mode:</span>
          <div className="w-[212px] h-[35px] border border-[#262626] rounded-md flex items-center justify-between pl-[11px] pr-[12px]">
            <span className="pt-[1px]">None (auto)</span>
            <Caret c="#e8e8e8" />
          </div>
        </div>
        <div className="mt-[8px] h-[16px] flex items-center pl-[4px]">
          <div className="w-[16px] h-[16px] rounded-[3px] border border-[#141414] bg-[#363636] shrink-0" />
          <span className="ml-[4px] mt-[3px]">Don't ask again</span>
        </div>
        <div className="mt-[15px] flex justify-end pr-[3px] gap-[4px]">
          <div className="w-[86px] h-[33px] pt-[1px] border border-[#262626] rounded-md flex items-center justify-center">Cancel</div>
          <div className="w-[86px] h-[33px] pt-[1px] border border-[#262626] rounded-md flex items-center justify-center">OK</div>
        </div>
      </div>
    </div>
  );
}

const menus: [string, string][] = [
  ["File", "w-[39px]"],
  ["Edit", "w-[42px]"],
  ["View", "w-[48px]"],
  ["Layer", "w-[51px]"],
  ["Object", "w-[60px]"],
  ["Path", "w-[45px]"],
  ["Text", "w-[42px]"],
  ["Filters", "w-[55px]"],
  ["Extensions", "w-[85px]"],
  ["Help", "w-[40px]"],
];

export default function App() {
  return (
    <div className="relative w-[1920px] h-[1020px] overflow-hidden flex flex-col bg-[#363636] font-['Noto_Sans',sans-serif]">
      <div className="h-[29px] shrink-0 bg-[#202020] flex items-center text-[14.3px] text-[#7f7f7f]">
        <div className="ml-[3px]"><Logo s={19} /></div>
        <span className="ml-[6px]">New document 1 - Inkscape</span>
        <div className="flex-1" />
        <svg width="13" height="13" viewBox="0 0 13 13"><path d="M0 6.500h13" stroke="#707070" strokeWidth="1" /></svg>
        <svg width="13" height="14" viewBox="0 0 13 14" className="ml-[45px]"><rect x="1" y="3" width="9" height="10" rx="1.500" fill="none" stroke="#707070" /><path d="M3.500 1h6a2.500 2.500 0 0 1 2.500 2.500V10" fill="none" stroke="#707070" /></svg>
        <svg width="13" height="13" viewBox="0 0 13 13" className="ml-[46px] mr-[26px]"><path d="M.5.5l12 12M12.500.5l-12 12" stroke="#707070" strokeWidth="1" /></svg>
      </div>
      <div className="h-[28px] shrink-0 bg-[#383838] border-b border-[#303030] flex items-center pl-[8px] pt-[2px] text-[14px] text-[#8c8c8c]">
        {menus.map(([m, w]) => <span key={m} className={`${w} shrink-0`}>{m}</span>)}
      </div>
      <CmdBar />
      <div className="h-[842px] flex shrink-0">
        <LeftBar />
        <div className="w-[1px] shrink-0" />
        <CenterArea />
        <div className="w-[12px] h-full shrink-0 bg-[#363636] flex flex-col items-center justify-center gap-[2px] pb-[1px]">
          <div className="w-[3px] h-[3px] rounded-full bg-[#e8e8e8]" />
          <div className="w-[3px] h-[3px] rounded-full bg-[#e8e8e8]" />
          <div className="w-[3px] h-[3px] rounded-full bg-[#e8e8e8]" />
        </div>
        <Dock />
        <RightBar />
      </div>
      <Palette />
      <Status />
      <Dialog />
    </div>
  );
}
